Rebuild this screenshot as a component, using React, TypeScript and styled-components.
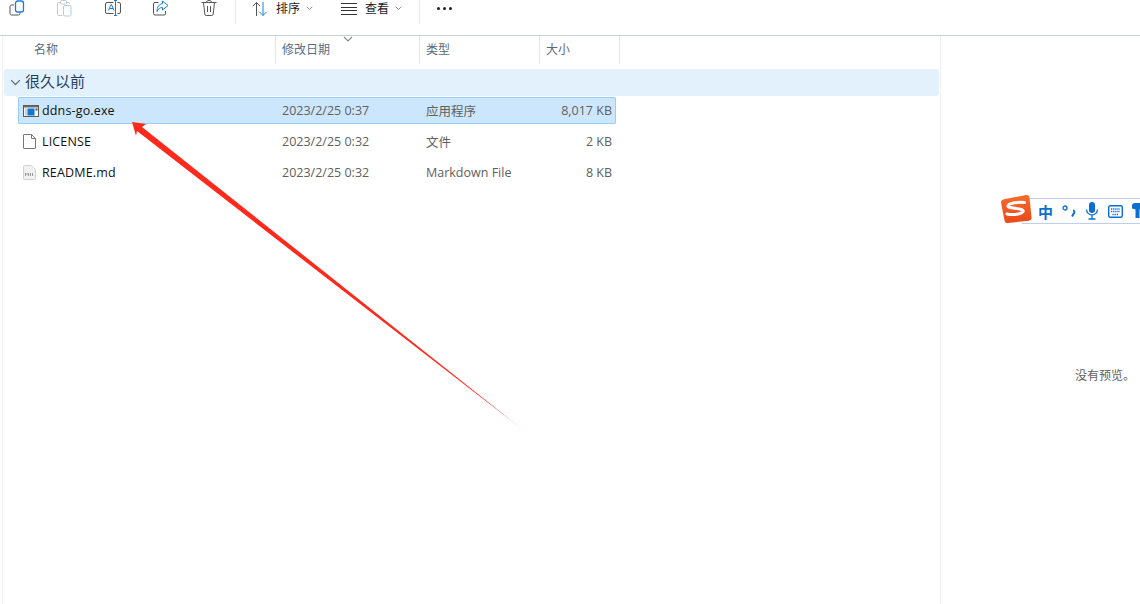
import React from 'react';
import styled, { createGlobalStyle } from 'styled-components';

const FONT = '"Open Sans", "Noto Sans CJK SC", sans-serif';

type FileRow = {
  name: string;
  date: string;
  type: string;
  size: string;
  kind: 'exe' | 'file' | 'md';
  selected?: boolean;
};

const files: FileRow[] = [
  { name: 'ddns-go.exe', date: '2023/2/25 0:37', type: '应用程序', size: '8,017 KB', kind: 'exe', selected: true },
  { name: 'LICENSE', date: '2023/2/25 0:32', type: '文件', size: '2 KB', kind: 'file' },
  { name: 'README.md', date: '2023/2/25 0:32', type: 'Markdown File', size: '8 KB', kind: 'md' },
];

const Chevron = ({ size = 7, color = '#7b7b7b' }: { size?: number; color?: string }) => (
  <svg width={size} height={size * 0.6} viewBox="0 0 10 6" fill="none" stroke={color} strokeWidth="1.2">
    <path d="M1 1l4 4 4-4" />
  </svg>
);

const CopyIcon = () => (
  <svg width="16" height="16" viewBox="0 0 16 16" fill="none">
    <path d="M5 5H2.500A1.500 1.500 0 0 0 1 6.500v7A1.500 1.500 0 0 0 2.500 15h7A1.500 1.500 0 0 0 11 13.500V12.500" stroke="#555" />
    <rect x="6.500" y="1" width="8" height="11" rx="2.200" stroke="#1a7fd4" strokeWidth="1.300" />
  </svg>
);

const PasteIcon = () => (
  <svg width="16" height="18" viewBox="0 0 16 18" fill="none">
    <path d="M3.500 2.500H1.500A1 1 0 0 0 .5 3.500v11A1 1 0 0 0 1.500 15.500h4M10 2.500h1.500a1 1 0 0 1 1 1V4" stroke="#c8c8c8" />
    <rect x="3.500" y=".5" width="6" height="3.500" rx="1" stroke="#c8c8c8" />
    <rect x="6.500" y="5.500" width="7.500" height="10.500" rx="1.500" stroke="#a9d0ef" />
  </svg>
);

const RenameIcon = () => (
  <svg width="16" height="16" viewBox="0 0 16 16" fill="none">
    <path d="M8.500 2.500H2A1.500 1.500 0 0 0 .5 4v8A1.500 1.500 0 0 0 2 13.500h6.500M12.500 2.500H14A1.500 1.500 0 0 1 15.500 4v8a1.500 1.500 0 0 1-1.500 1.500h-1.500" stroke="#555" />
    <path d="M9 .5h3M10.500 .5v15M9 15.500h3" stroke="#1a7fd4" />
    <path d="M3.500 10.500L6 4.500h.5l2.500 6M4.500 8.500h3.500" stroke="#1a7fd4" />
  </svg>
);

const ShareIcon = () => (
  <svg width="16" height="16" viewBox="0 0 16 16" fill="none">
    <path d="M5.500 2.500H2A1.500 1.500 0 0 0 .5 4v9.500A1.500 1.500 0 0 0 2 15h9a1.500 1.500 0 0 0 1.500-1.500V11" stroke="#555" />
    <path d="M9.500 1l5.500 4.500L9.500 10V7.500C7 7.500 5 9 4 11.500c0-4.500 2-7.500 5.500-7.800V1z" stroke="#1a7fd4" strokeLinejoin="round" />
  </svg>
);

const TrashIcon = () => (
  <svg width="16" height="16" viewBox="0 0 16 16" fill="none" stroke="#555">
    <path d="M.5 2.500h15M5.500 2.500C5.500 1 6.500.5 8 .5s2.500.5 2.500 2M2.500 2.500l1.300 11.500a1.500 1.500 0 0 0 1.500 1.500h5.400a1.500 1.500 0 0 0 1.500-1.500l1.300-11.500M6.500 6v6M9.500 6v6" />
  </svg>
);

const SortIcon = () => (
  <svg width="16" height="16" viewBox="0 0 16 16" fill="none">
    <path d="M4.500 15V1.500M.8 5.200l3.700-3.700 3.700 3.700" stroke="#555" />
    <path d="M11 1v13.500M7.300 10.800l3.700 3.700 3.700-3.700" stroke="#1a7fd4" />
  </svg>
);

const ViewIcon = () => (
  <svg width="16" height="12" viewBox="0 0 16 12" fill="none" stroke="#333">
    <path d="M0 .5h16M0 4.500h16M0 7.500h16M0 11.500h16" />
  </svg>
);

const ExeIcon = () => (
  <svg width="16" height="12" viewBox="0 0 16 12">
    <rect x=".5" y=".5" width="15" height="11" fill="#f7f7f7" stroke="#5a5a5a" />
    <rect x="1" y="1" width="14" height="1.500" fill="#6e6e6e" />
    <rect x="2" y="3.500" width="2" height="7" fill="#cfcfcf" />
    <rect x="4.500" y="3.500" width="7" height="7" fill="#0f78d4" />
    <rect x="12.500" y="3.500" width="2" height="2" fill="#555" />
  </svg>
);

const PlainFileIcon = () => (
  <svg width="13" height="15" viewBox="0 0 13 15" fill="#fff" stroke="#777">
    <path d="M1 .5H8.500L12.500 4.500v9.500a.5.5 0 0 1-.5.5H1a.5.5 0 0 1-.5-.5V1A.5.5 0 0 1 1 .5z" />
    <path d="M8.500 .5V4.500h4" fill="none" />
  </svg>
);

const MdIcon = () => (
  <svg width="13" height="15" viewBox="0 0 13 15">
    <path d="M1.500.5H8.500L12.500 4.500v9a1 1 0 0 1-1 1h-10a1 1 0 0 1-1-1v-12a1 1 0 0 1 1-1z" fill="#f1f1f1" stroke="#d2d2d2" />
    <path d="M2.500 11V8l1.500 1.500L5.500 8v3M7.500 8v3M9.500 8v3" fill="none" stroke="#999" />
  </svg>
);

const fileIcons = { exe: <ExeIcon />, file: <PlainFileIcon />, md: <MdIcon /> };

const Arrow = () => (
  <ArrowLayer width="420" height="330" viewBox="0 0 420 330">
    <defs>
      <linearGradient id="tail" gradientUnits="userSpaceOnUse" x1="12" y1="12" x2="407" y2="323">
        <stop offset="0.9" stopColor="#ff2a1c" />
        <stop offset="1" stopColor="#ff8f88" />
      </linearGradient>
    </defs>
    <polygon points="12,12 26,14 22,17 180,142.500 407,323 180,147.500 17,21 16,26" fill="url(#tail)" />
  </ArrowLayer>
);

const SogouBar = () => (
  <ImeBar>
    <ImeLogo>
      <svg width="32" height="30" viewBox="0 0 32 30">
        <defs>
          <linearGradient id="logo" x1="0" y1="0" x2="0" y2="1">
            <stop offset="0" stopColor="#fb6a2c" />
            <stop offset="1" stopColor="#e8481a" />
          </linearGradient>
        </defs>
        <path d="M3 5.500L26 1a3 3 0 0 1 3.500 2.300l2 20a3 3 0 0 1-2.500 3.400L8 29a3 3 0 0 1-3.500-2.500L1 8.500a3 3 0 0 1 2-3z" fill="url(#logo)" />
        <path d="M24.500 8.500C19 8 9 8.500 8 12c-.8 3 13 1.500 15 4.500 1.500 3-9 5-16 3.500" fill="none" stroke="#fff" strokeWidth="3" strokeLinecap="round" />
      </svg>
    </ImeLogo>
    <ImeChar>中</ImeChar>
    <ImeGlyph width="14" height="14" viewBox="0 0 14 14">
      <circle cx="3" cy="4" r="2" fill="none" stroke="#0c6fd0" strokeWidth="1.300" />
      <path d="M11 6.500c1.500 0 1.500 1.500 1 2.500L10 12.500" fill="none" stroke="#0c6fd0" strokeWidth="2" />
    </ImeGlyph>
    <ImeGlyph width="14" height="18" viewBox="0 0 14 18">
      <rect x="4" y="0" width="6" height="11" rx="3" fill="#0c6fd0" />
      <path d="M1.500 7.500a5.500 5.500 0 0 0 11 0M7 13v4M3.500 17h7" fill="none" stroke="#0c6fd0" strokeWidth="1.300" />
    </ImeGlyph>
    <ImeGlyph width="15" height="13" viewBox="0 0 15 13">
      <rect x=".7" y=".7" width="13.600" height="11.600" rx="1.500" fill="none" stroke="#0c6fd0" strokeWidth="1.400" />
      <path d="M3 4h9M3 6.500h9M4.500 9.500h6" stroke="#0c6fd0" strokeWidth="1.400" strokeDasharray="1.300 .8" />
    </ImeGlyph>
    <ImeGlyph width="10" height="16" viewBox="0 0 10 16">
      <path d="M0 2.500C0 1 1 0 3 0h4c2 0 3 1 3 2.500v3L7.500 6.500V15h-4V6.500L0 5.500z" fill="#0c6fd0" />
    </ImeGlyph>
  </ImeBar>
);

export default function App() {
  return (
    <Window>
      <GlobalStyle />
      <Toolbar>
        <IconGroup>
          <ToolIcon><CopyIcon /></ToolIcon>
          <ToolIcon><PasteIcon /></ToolIcon>
          <ToolIcon><RenameIcon /></ToolIcon>
          <ToolIcon><ShareIcon /></ToolIcon>
          <ToolIcon><TrashIcon /></ToolIcon>
        </IconGroup>
        <Divider />
        <MenuButton $width={89}>
          <SortIcon />
          <MenuLabel>排序</MenuLabel>
          <Chevron />
        </MenuButton>
        <MenuButton $width={94}>
          <ViewIcon />
          <MenuLabel>查看</MenuLabel>
          <Chevron />
        </MenuButton>
        <Divider />
        <MoreDots>
          <Dot />
          <Dot />
          <Dot />
        </MoreDots>
      </Toolbar>
      <Body>
        <ListPane>
          <HeaderRow>
            <HeaderCell $pad={31}>名称</HeaderCell>
            <HeaderCell $pad={6}>
              <SortMark><Chevron size={10} color="#8a8a8a" /></SortMark>
              修改日期
            </HeaderCell>
            <HeaderCell $pad={6}>类型</HeaderCell>
            <HeaderCell $pad={6}>大小</HeaderCell>
          </HeaderRow>
          <GroupRow>
            <Chevron size={11} color="#5f7488" />
            <GroupLabel>很久以前</GroupLabel>
          </GroupRow>
          <Rows>
            {files.map((f) => (
              <Row key={f.name} $selected={f.selected}>
                <NameCell>
                  <IconSlot>{fileIcons[f.kind]}</IconSlot>
                  {f.name}
                </NameCell>
                <MetaCell>{f.date}</MetaCell>
                <MetaCell>{f.type}</MetaCell>
                <SizeCell>{f.size}</SizeCell>
              </Row>
            ))}
          </Rows>
          <Arrow />
        </ListPane>
        <PreviewPane>没有预览。</PreviewPane>
      </Body>
      <SogouBar />
    </Window>
  );
}

const GlobalStyle = createGlobalStyle`
  html, body {
    margin: 0;
    padding: 0;
    background: #fff;
    overflow: hidden;
  }
  * {
    box-sizing: border-box;
  }
`;

const Window = styled.div`
  position: relative;
  width: 1140px;
  height: 604px;
  overflow: hidden;
  background: #fff;
  font-family: ${FONT};
  font-size: 12px;
  color: #1a1a1a;
`;

const Toolbar = styled.div`
  height: 36px;
  display: flex;
  align-items: flex-start;
  border-bottom: 1px solid #c6ced9;
`;

const IconGroup = styled.div`
  display: flex;
  gap: 32px;
  padding-left: 9px;
  width: 235px;
`;

const ToolIcon = styled.div`
  flex: none;
  width: 16px;
  height: 18px;
  display: flex;
  align-items: flex-start;
`;

const Divider = styled.div`
  width: 1px;
  height: 24px;
  background: #e9e9e9;
`;

const MenuButton = styled.div<{ $width: number }>`
  width: ${(p) => p.$width}px;
  height: 17px;
  padding-left: 16px;
  display: flex;
  align-items: center;
  color: #1c1c1c;
`;

const MenuLabel = styled.span`
  margin: 0 6px 0 8px;
  font-size: 12px;
  line-height: 16px;
`;

const MoreDots = styled.div`
  display: flex;
  gap: 3px;
  height: 17px;
  align-items: center;
  padding-left: 17px;
`;

const Dot = styled.span`
  width: 3px;
  height: 3px;
  border-radius: 50%;
  background: #222;
`;

const Body = styled.div`
  display: flex;
  height: 568px;
`;

const ListPane = styled.div`
  position: relative;
  flex: none;
  width: 939px;
  margin-left: 2px;
  border-left: 1px solid #f0f0f0;
  border-right: 1px solid #f0f0f0;
`;

const HeaderRow = styled.div`
  display: grid;
  grid-template-columns: 273px 144px 120px 80px;
  height: 28px;
`;

const HeaderCell = styled.div<{ $pad: number }>`
  position: relative;
  padding-left: ${(p) => p.$pad}px;
  border-right: 1px solid #e5e5e5;
  line-height: 27px;
  color: #5a6b80;
`;

const SortMark = styled.span`
  position: absolute;
  left: 67px;
  top: -2px;
  line-height: 8px;
`;

const GroupRow = styled.div`
  display: flex;
  align-items: center;
  gap: 4px;
  height: 27px;
  margin: 5px 1px 1px 1px;
  padding-left: 6px;
  background: #e3f1fd;
  border-radius: 3px;
`;

const GroupLabel = styled.span`
  font-size: 15px;
  line-height: 22px;
  margin-bottom: 3px;
  color: #1f3f66;
`;

const Rows = styled.div`
  display: flex;
  flex-direction: column;
  gap: 4px;
  margin-left: 15px;
  width: 598px;
`;

const Row = styled.div<{ $selected?: boolean }>`
  display: grid;
  grid-template-columns: 264px 144px 120px 66px;
  align-items: center;
  height: 27px;
  padding-right: 4px;
  border-radius: 2px;
  background: ${(p) => (p.$selected ? '#cce6fd' : 'transparent')};
  box-shadow: ${(p) => (p.$selected ? 'inset 0 0 0 1px #99cdf7' : 'none')};
`;

const NameCell = styled.div`
  display: flex;
  align-items: center;
  padding-left: 4px;
  font-size: 12.500px;
  letter-spacing: 0.15px;
  color: #111;
`;

const IconSlot = styled.span`
  width: 20px;
  display: flex;
  justify-content: flex-start;
  padding-left: 1px;
`;

const MetaCell = styled.div`
  font-size: 12.500px;
  color: #5f6060;
  white-space: nowrap;
`;

const SizeCell = styled(MetaCell)`
  text-align: right;
`;

const ArrowLayer = styled.svg`
  position: absolute;
  left: 117px;
  top: 74px;
`;

const PreviewPane = styled.div`
  flex: 1;
  display: flex;
  justify-content: flex-end;
  align-items: flex-start;
  padding: 330px 5px 0 0;
  color: #5f5f5f;
`;

const ImeBar = styled.div`
  position: absolute;
  left: 1022px;
  top: 198px;
  width: 118px;
  height: 26px;
  padding-left: 16px;
  display: flex;
  align-items: center;
  gap: 9px;
  background: #fff;
  border-top: 1px solid #bfd0ea;
  border-bottom: 1px solid #bfd0ea;
`;

const ImeLogo = styled.span`
  position: absolute;
  left: -22px;
  top: -5px;
  line-height: 0;
`;

const ImeChar = styled.span`
  font-size: 15px;
  font-weight: 700;
  color: #0c6fd0;
`;

const ImeGlyph = styled.svg`
  flex: none;
`;
